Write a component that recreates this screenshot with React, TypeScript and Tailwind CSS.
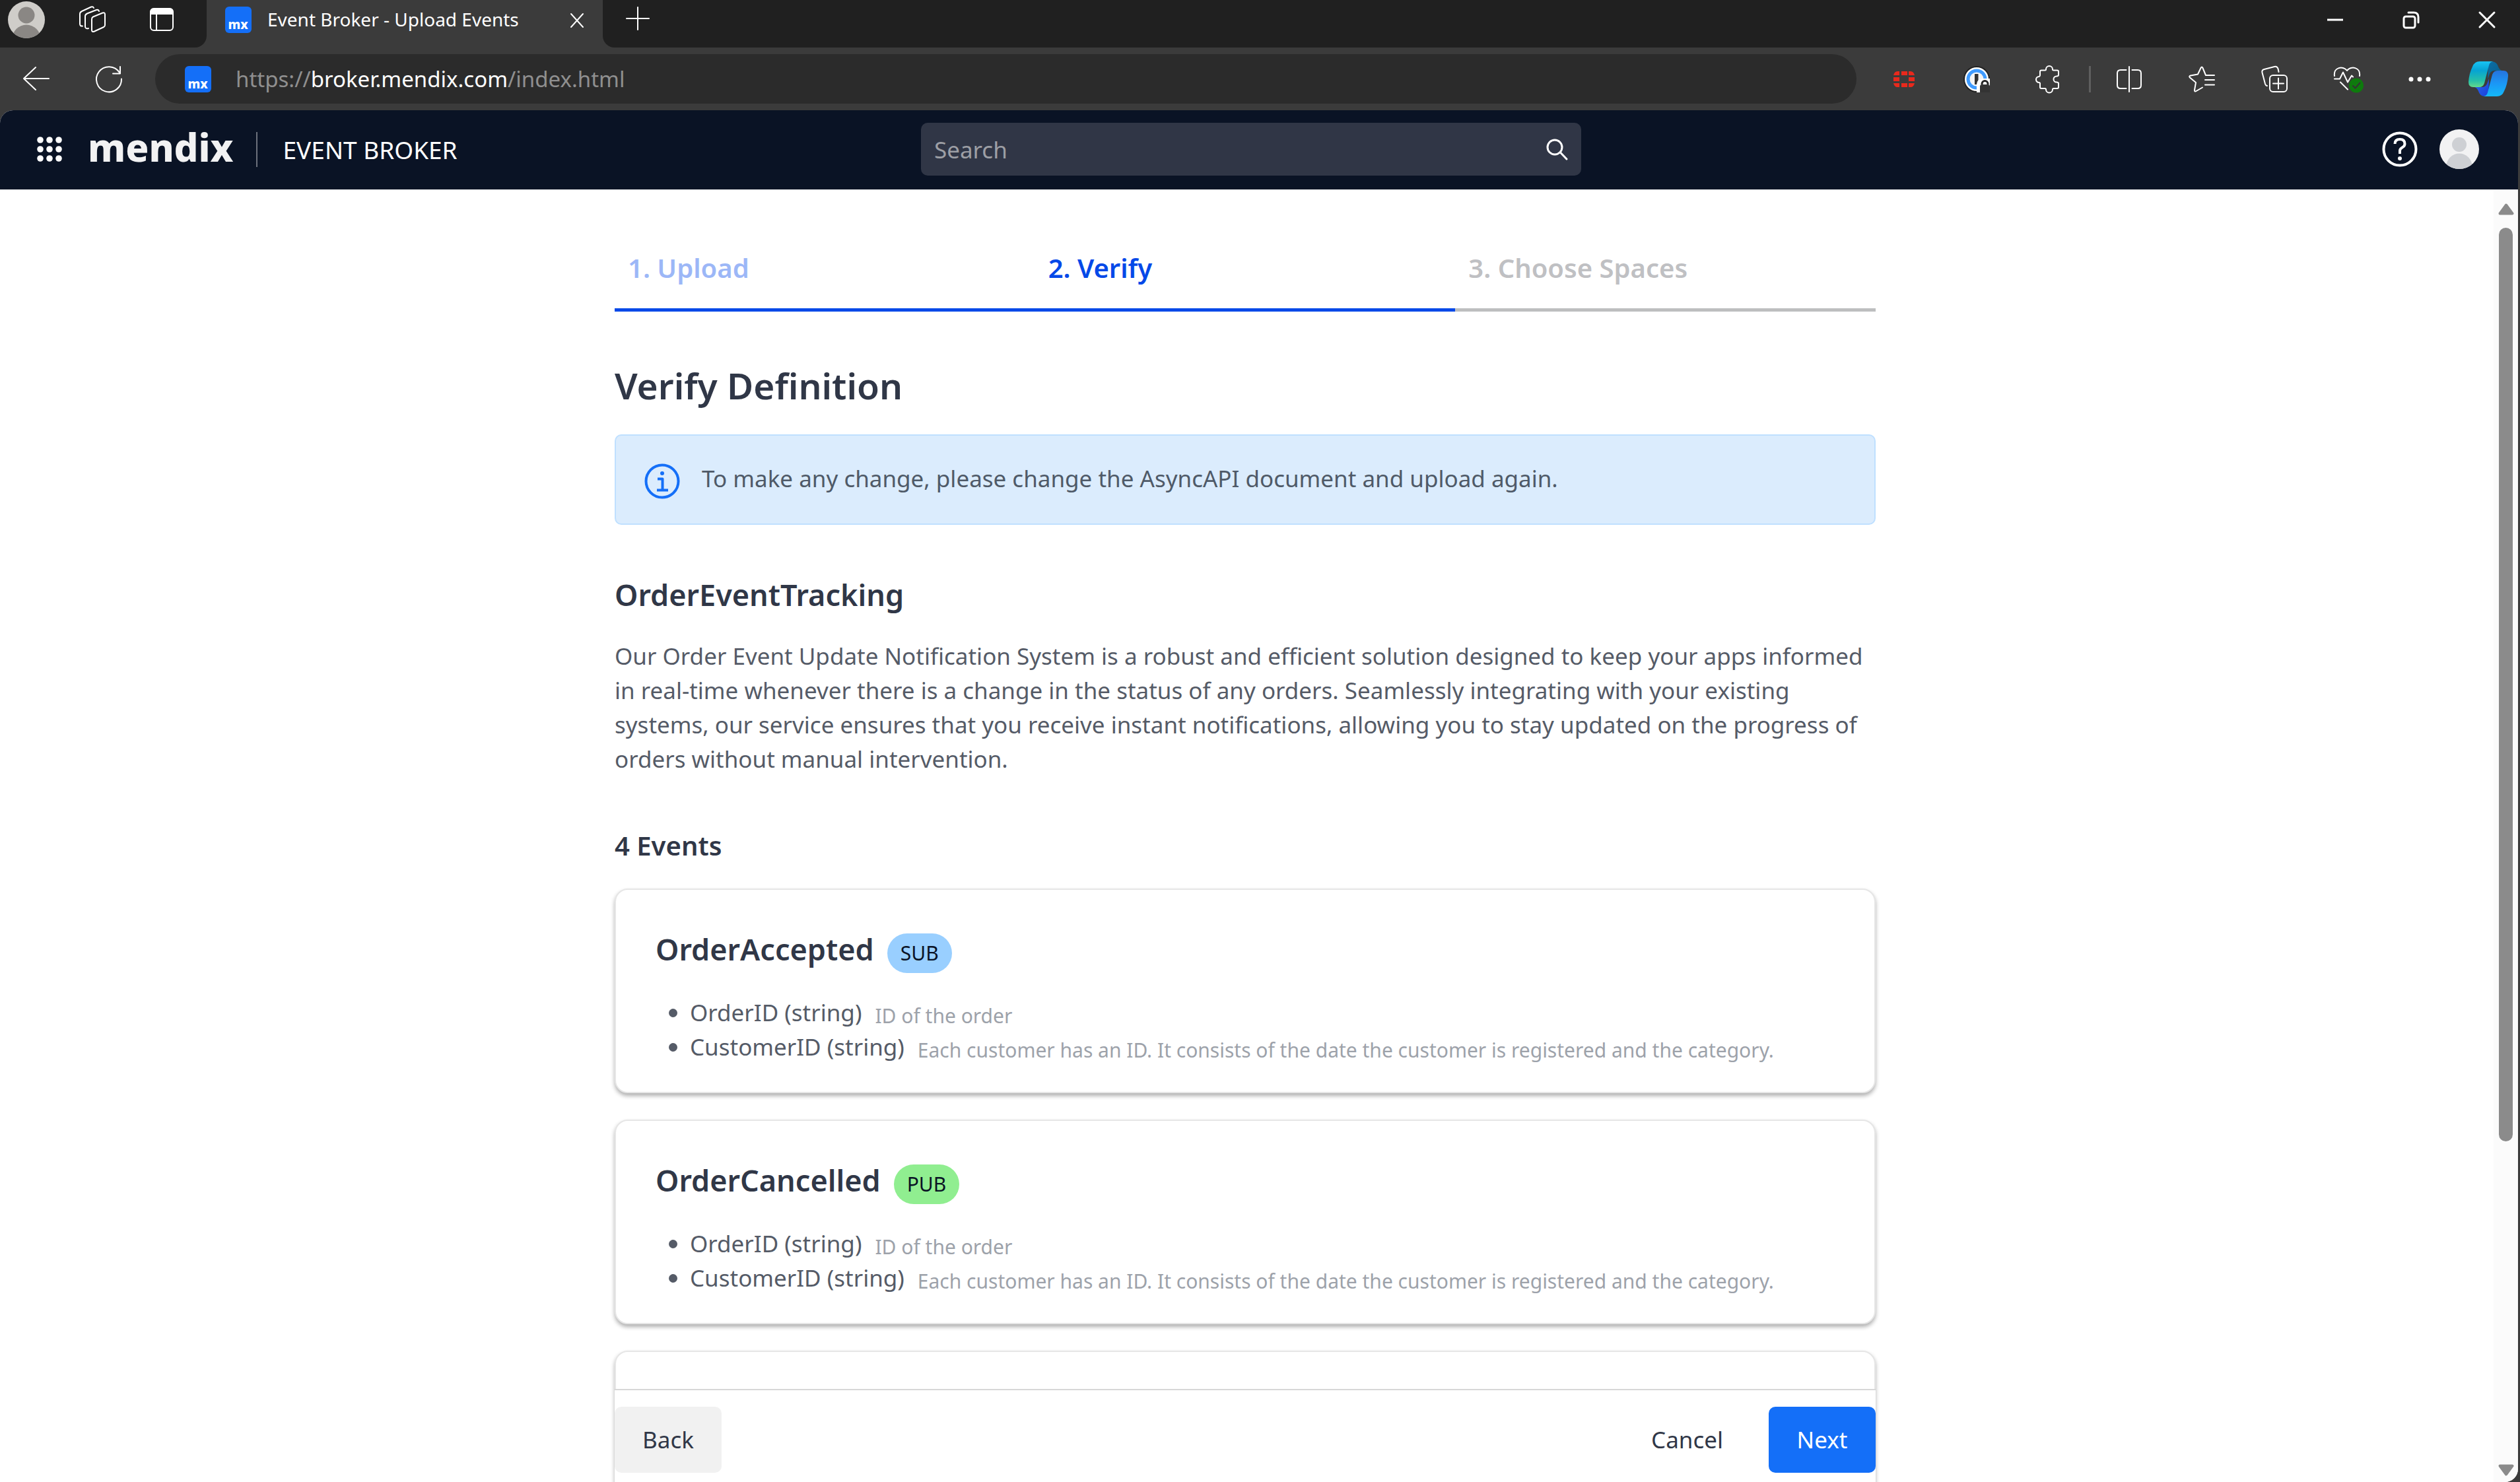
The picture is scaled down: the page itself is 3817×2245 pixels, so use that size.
import React from 'react';

type Field = { name: string; type: string; description: string };
type EventDef = { name: string; kind: 'SUB' | 'PUB'; fields: Field[] };

const FIELDS: Field[] = [
  { name: 'OrderID', type: 'string', description: 'ID of the order' },
  {
    name: 'CustomerID',
    type: 'string',
    description:
      'Each customer has an ID. It consists of the date the customer is registered and the category.',
  },
];

const EVENTS: EventDef[] = [
  { name: 'OrderAccepted', kind: 'SUB', fields: FIELDS },
  { name: 'OrderCancelled', kind: 'PUB', fields: FIELDS },
];

function Stroke({
  size = 40,
  width = 2,
  children,
}: {
  size?: number;
  width?: number;
  children: React.ReactNode;
}) {
  return (
    <svg
      width={size}
      height={size}
      viewBox={`0 0 ${size} ${size}`}
      fill="none"
      stroke="currentColor"
      strokeWidth={width}
      strokeLinecap="round"
      strokeLinejoin="round"
      className="shrink-0 overflow-visible"
      aria-hidden="true"
    >
      {children}
    </svg>
  );
}

function MxFavicon() {
  return (
    <svg width="40" height="40" viewBox="0 0 40 40" className="shrink-0" aria-hidden="true">
      <rect width="40" height="40" rx="6" fill="#146ff8" />
      <text x="19.5" y="34" textAnchor="middle" fontFamily="Noto Sans" fontWeight="800" fontSize="19" fill="#fff">
        mx
      </text>
    </svg>
  );
}

function ProfileAvatar() {
  return (
    <svg width="58" height="58" viewBox="0 0 58 58" aria-hidden="true">
      <defs>
        <clipPath id="profile-clip">
          <circle cx="29" cy="29" r="28" />
        </clipPath>
      </defs>
      <circle cx="29" cy="29" r="28" fill="#cfcdc9" />
      <g clipPath="url(#profile-clip)" fill="#8a8784">
        <circle cx="29" cy="22" r="12.5" />
        <circle cx="29" cy="58" r="21.5" />
      </g>
    </svg>
  );
}

function UserAvatar() {
  return (
    <svg width="60" height="60" viewBox="0 0 60 60" aria-hidden="true">
      <defs>
        <clipPath id="user-clip">
          <circle cx="30" cy="30" r="30" />
        </clipPath>
      </defs>
      <circle cx="30" cy="30" r="30" fill="#f2f2f3" />
      <g clipPath="url(#user-clip)" fill="#ced0d4">
        <circle cx="30" cy="23" r="11" />
        <circle cx="30" cy="56" r="19.5" />
      </g>
    </svg>
  );
}

function FortinetIcon() {
  return (
    <svg width="32" height="24" viewBox="0 0 32 24" fill="#e8291c" aria-hidden="true">
      <path d="M6 0h3v6H0C1 2 3 0 6 0ZM12 0h9v6h-9ZM23 0h3c3 0 5 2 6 6h-9ZM0 9h9v6H0ZM23 9h9v6h-9ZM0 18h9v6H6c-3 0-5-2-6-6ZM12 18h9v6h-9ZM23 18h9c-1 4-3 6-6 6h-3Z" />
    </svg>
  );
}

function PasswordIcon() {
  return (
    <svg width="40" height="40" viewBox="0 0 40 40" aria-hidden="true">
      <circle cx="20" cy="20" r="20" fill="#222" />
      <circle cx="20" cy="20" r="18" fill="#fff" />
      <circle cx="20" cy="20" r="13" fill="#f4f4f4" stroke="#3f9bff" strokeWidth="5" />
      <rect x="17" y="12" width="5.5" height="16" fill="#333" />
      <path d="M20 40V28q0-8 9-9h11v21Z" fill="#fff" />
      <path d="M25 40V31q0-3 3-3h9q3 0 3 3v9Z" fill="#333" />
      <path d="M28 28v-1a4.500 4.500 0 0 1 9 0v1" fill="none" stroke="#222" strokeWidth="3" />
    </svg>
  );
}

function CopilotIcon() {
  return (
    <svg width="60" height="54" viewBox="0 0 60 54" aria-hidden="true">
      <defs>
        <linearGradient id="cp-left" x1="0" y1="0" x2="0" y2="1">
          <stop offset="0" stopColor="#18c4f4" />
          <stop offset="0.35" stopColor="#06a3d4" />
          <stop offset="0.75" stopColor="#27c0a8" />
          <stop offset="1" stopColor="#63d98a" />
        </linearGradient>
        <linearGradient id="cp-top" x1="0" y1="0" x2="1" y2="1">
          <stop offset="0" stopColor="#0a6ea6" />
          <stop offset="1" stopColor="#0c5c86" />
        </linearGradient>
        <linearGradient id="cp-right" x1="0" y1="1" x2="0" y2="0">
          <stop offset="0" stopColor="#2673dd" />
          <stop offset="0.5" stopColor="#1b97f6" />
          <stop offset="1" stopColor="#14b9f8" />
        </linearGradient>
        <linearGradient id="cp-bottom" x1="0" y1="0" x2="1" y2="1">
          <stop offset="0" stopColor="#1b3fd8" />
          <stop offset="1" stopColor="#2a6af0" />
        </linearGradient>
      </defs>
      <path d="M30 0h6q7 1 9 8 2 5 6 6H40q-6 0-8 5l-3 8Z" fill="url(#cp-top)" />
      <path d="M30 0h6q7 1 9 8 2 5 6 6H40q-6 0-8 5l-3 8Z" fill="url(#cp-bottom)" transform="rotate(180 30 26.500)" />
      <path d="M17 0h20q-5 1-6 6l-7 27q-2 6-8 6H7q-7 0-7-8Q1 18 6 8 9 0 17 0Z" fill="url(#cp-left)" />
      <path
        d="M17 0h20q-5 1-6 6l-7 27q-2 6-8 6H7q-7 0-7-8Q1 18 6 8 9 0 17 0Z"
        fill="url(#cp-right)"
        transform="rotate(180 30 26.500)"
      />
    </svg>
  );
}

function ToolButton({ label, children }: { label: string; children: React.ReactNode }) {
  return (
    <button type="button" aria-label={label} className="flex h-full w-[110px] shrink-0 items-center justify-center">
      {children}
    </button>
  );
}

function TabStrip() {
  return (
    <div className="flex h-[72px] bg-[#3b3b3b] text-white">
      <div className="flex w-[313px] items-start rounded-br-[18px] bg-[#202020]">
        <button type="button" aria-label="Profile" className="ml-[11px] mt-px">
          <ProfileAvatar />
        </button>
        <button type="button" aria-label="Workspaces" className="ml-[51px] mt-[9px]">
          <Stroke>
            <path d="M19 20q0-2.500 2-3.500l14.500-6Q39 9.500 39 13v16q0 2-2 3l-14 6.500q-4 1.500-4-2Z" />
            <path d="M30 8q-1-3-4-2l-14 5.500q-3 1.500-3 4V31q0 4 5 3" />
            <path d="M22 3q-1-2.500-4-1.500L4 8Q1 9.500 1 12v15q0 4 4 3.500" />
          </Stroke>
        </button>
        <button type="button" aria-label="Tab actions" className="ml-[67px] mt-[12px]">
          <Stroke size={36}>
            <rect x="1" y="1" width="34" height="33" rx="5" />
            <path d="M1.500 9V6Q1.500 1.500 6 1.500h24Q34.500 1.500 34.500 6v3Z" fill="currentColor" />
            <path d="M10 10v24" />
          </Stroke>
        </button>
      </div>
      <div className="flex w-[600px] items-start pl-[28px] pt-[10px]">
        <MxFavicon />
        <span className="ml-[24px] flex-1 whitespace-nowrap text-[28px] leading-[38px]">
          Event Broker - Upload Events
        </span>
        <button type="button" aria-label="Close tab" className="mr-[28px] mt-[10px]">
          <Stroke size={22}>
            <path d="M2 1l18 20M20 1L2 21" />
          </Stroke>
        </button>
      </div>
      <div className="flex flex-1 items-start rounded-bl-[18px] bg-[#202020]">
        <button type="button" aria-label="New tab" className="ml-[36px] mt-[11px]">
          <Stroke size={34}>
            <path d="M17 0v34M0 17h34" />
          </Stroke>
        </button>
        <div className="ml-auto flex h-[59px] gap-[15px]">
          <button type="button" aria-label="Minimize" className="flex w-[100px] items-center justify-center">
            <Stroke size={26} width={3}>
              <path d="M1 13h24" strokeLinecap="butt" />
            </Stroke>
          </button>
          <button type="button" aria-label="Restore" className="flex w-[100px] items-center justify-center">
            <Stroke size={26} width={3}>
              <rect x="2" y="8" width="17" height="17" rx="3" />
              <path d="M9 2h8q7 0 7 7v8" />
            </Stroke>
          </button>
          <button type="button" aria-label="Close window" className="flex w-[100px] items-center justify-center">
            <Stroke size={26} width={3}>
              <path d="M2 2l22 22M24 2L2 24" />
            </Stroke>
          </button>
        </div>
      </div>
    </div>
  );
}

function Toolbar() {
  return (
    <div className="flex h-[95px] items-center bg-[#3b3b3b] text-white">
      <ToolButton label="Back">
        <Stroke>
          <path d="M39 19H2M19 2L1 19l18 17" />
        </Stroke>
      </ToolButton>
      <ToolButton label="Reload">
        <Stroke>
          <path d="M39 19.500A19 19 0 1 1 36 10" />
          <path d="M37 1v10.500H26" />
        </Stroke>
      </ToolButton>
      <div className="ml-[15px] mr-[17px] flex h-[75px] flex-1 items-center rounded-full bg-[#2b2b2b] pl-[45px]">
        <MxFavicon />
        <span className="ml-[37px] whitespace-nowrap text-[33px] leading-[48px] text-[#8f8f8f]">
          https://<span className="text-white">broker.mendix.com</span>/index.html
        </span>
      </div>
      <ToolButton label="Fortinet">
        <FortinetIcon />
      </ToolButton>
      <ToolButton label="Password manager">
        <PasswordIcon />
      </ToolButton>
      <ToolButton label="Extensions">
        <Stroke>
          <path d="M8 6.500h5.500q1.500 0 1.500-1.500a5 5 0 0 1 10 0q0 1.500 1.500 1.500H32q2 0 2 2v5q0 2-3 2a4.500 4.500 0 0 0 0 9q3 0 3 2V32q0 2-2 2h-5.500q-1.500 0-1.500 1.500a5 5 0 0 1-10 0q0-1.500-1.500-1.500H8q-2 0-2-2v-5.500q0-1.500-1.500-1.500a4.500 4.500 0 0 1 0-9Q6 15.500 6 14V8.500q0-2 2-2Z" />
        </Stroke>
      </ToolButton>
      <div className="ml-[5px] mr-[3px] h-[40px] w-[3px] bg-[#5f5f5f]" />
      <ToolButton label="Split screen">
        <Stroke>
          <path d="M20 1v38M15.500 6H7q-5 0-5 5v18q0 5 5 5h8.500M24.500 6H33q5 0 5 5v18q0 5-5 5h-8.500" />
        </Stroke>
      </ToolButton>
      <ToolButton label="Favorites">
        <Stroke>
          <path d="M39 14H26L21.500 3Q20 0 18.500 3L14 12.500 3 14.500q-3 1-1 3l9 7.500-2 11.500q0 3 2.500 1.500l9.500-5.500M25 21h14M25 28.500h14" />
        </Stroke>
      </ToolButton>
      <ToolButton label="Collections">
        <Stroke>
          <path d="M9 30q-2 0-3-3L1.500 10q-1-4 3-5L20 1q4-1 5.500 3l1 5" />
          <rect x="13" y="14" width="26" height="25" rx="5" />
          <path d="M26 18.500v16M18 26.500h16" />
        </Stroke>
      </ToolButton>
      <ToolButton label="Browser essentials">
        <Stroke>
          <path d="M1 15C-1 2 14-1 20 7c6-8 21-5 19 8" />
          <path d="M1 19.500h8l5-10 7 15 6-10 2 2M10 24.500l11 11" />
          <circle cx="34" cy="29.500" r="11" fill="#0e7a0d" stroke="none" />
          <path d="M29 30l3.500 3.500 7-8" stroke="#333" />
        </Stroke>
      </ToolButton>
      <ToolButton label="Settings and more">
        <svg width="34" height="8" viewBox="0 0 34 8" fill="currentColor" aria-hidden="true">
          <circle cx="4" cy="4" r="3.500" />
          <circle cx="17" cy="4" r="3.500" />
          <circle cx="30" cy="4" r="3.500" />
        </svg>
      </ToolButton>
      <button type="button" aria-label="Copilot" className="flex w-[97px] shrink-0 items-center justify-center">
        <CopilotIcon />
      </button>
    </div>
  );
}

function AppHeader() {
  return (
    <header className="flex h-[120px] shrink-0 items-center bg-[#0a1325] pb-[2px] pl-[35px] pr-[59px] text-white">
      <div className="flex flex-1 items-center">
        <button type="button" aria-label="App switcher" className="px-[21px]">
          <svg width="38" height="38" viewBox="0 0 38 38" fill="currentColor" aria-hidden="true">
            {[5, 19, 33].map((y) =>
              [5, 19, 33].map((x) => <circle key={`${x}-${y}`} cx={x} cy={y} r="4.800" />),
            )}
          </svg>
        </button>
        <a href="#home" className="mb-[6px] ml-[18px] text-[58px] font-extrabold leading-[72px] text-[#f2f2f3]">
          mendix
        </a>
        <div className="ml-[34px] h-[53px] w-[2px] bg-[#6c717c]" />
        <span className="ml-[39px] mt-[2px] whitespace-nowrap text-[37px] leading-[52px]">EVENT BROKER</span>
      </div>
      <form role="search" className="flex h-[80px] w-[1000px] items-center rounded-[10px] bg-[#303646] px-[20px]">
        <input
          type="search"
          aria-label="Search"
          placeholder="Search"
          className="h-full min-w-0 flex-1 bg-transparent text-[35px] leading-[52px] text-white outline-none placeholder:text-[#9d9fa5]"
        />
        <button type="submit" aria-label="Submit search">
          <Stroke size={32} width={3}>
            <circle cx="12" cy="13" r="11" />
            <path d="M20.500 21L30 31" />
          </Stroke>
        </button>
      </form>
      <div className="flex flex-1 items-center justify-end gap-[34px]">
        <button type="button" aria-label="Help">
          <Stroke size={52} width={4}>
            <circle cx="26" cy="26" r="24.500" />
            <path d="M18.500 18q0-7 7.500-7t7.500 7q0 3.500-4 5.500-3.500 2-3.500 5v4.500" strokeLinecap="butt" />
            <circle cx="26" cy="40" r="3" fill="currentColor" stroke="none" />
          </Stroke>
        </button>
        <button type="button" aria-label="Account">
          <UserAvatar />
        </button>
      </div>
    </header>
  );
}

function Steps() {
  return (
    <ol className="grid grid-cols-3 text-[40px] font-semibold leading-[60px]">
      <li className="border-b-[5px] border-[#0549e8] pb-[31px] pl-[20px] text-[#9cb7f7]">1. Upload</li>
      <li aria-current="step" className="border-b-[5px] border-[#0549e8] pb-[31px] pl-[20px] text-[#0549e8]">
        2. Verify
      </li>
      <li className="border-b-[5px] border-[#bdbebf] pb-[31px] pl-[20px] text-[#bfc0c3]">3. Choose Spaces</li>
    </ol>
  );
}

function EventCard({ event }: { event?: EventDef }) {
  return (
    <article className="min-h-[310px] rounded-[20px] border-2 border-[#e6e6e6] bg-white px-[60px] pb-[39px] pt-[60px] shadow-[0_4px_6px_rgba(0,0,0,0.32)]">
      {event && (
        <>
          <div className="flex items-baseline gap-[20px]">
            <h4 className="text-[45px] font-semibold leading-[60px] text-[#303747]">{event.name}</h4>
            <span
              className={
                event.kind === 'SUB'
                  ? 'rounded-full bg-[#99cfff] px-[20px] text-[30px] leading-[60px] text-[#0a1325]'
                  : 'rounded-full bg-[#90ee90] px-[20px] text-[30px] leading-[60px] text-[#0a1325]'
              }
            >
              {event.kind}
            </span>
          </div>
          <ul className="mt-[34px] pl-[20px]">
            {event.fields.map((f) => (
              <li key={f.name} className="flex items-end">
                <span className="mr-[19px] size-[13px] self-center rounded-full bg-[#555b67]" />
                <span className="text-[35px] leading-[52px] text-[#555b67]">
                  {f.name} ({f.type})
                </span>
                <span className="ml-[20px] text-[30px] leading-[42px] text-[#9da2aa]">{f.description}</span>
              </li>
            ))}
          </ul>
        </>
      )}
    </article>
  );
}

function Scrollbar() {
  return (
    <div className="flex w-[37px] shrink-0 flex-col items-center bg-[#fbfbfb] pb-[9px] pt-[21px]" aria-hidden="true">
      <svg width="24" height="18" viewBox="0 0 24 18" fill="#8b8b8b" stroke="#8b8b8b" strokeWidth="4" strokeLinejoin="round">
        <path d="M12 2.500L21.500 15.500h-19Z" />
      </svg>
      <div className="mb-[28px] mt-[19px] min-h-0 w-[21px] flex-1">
        <div className="h-3/4 rounded-full bg-[#8b8b8b]" />
      </div>
      <svg width="24" height="18" viewBox="0 0 24 18" fill="#8b8b8b" stroke="#8b8b8b" strokeWidth="4" strokeLinejoin="round">
        <path d="M12 15.500L21.500 2.500h-19Z" />
      </svg>
    </div>
  );
}

export default function App() {
  return (
    <div className="flex h-screen flex-col overflow-hidden bg-[#3b3b3b] font-['Noto_Sans',sans-serif]">
      <TabStrip />
      <Toolbar />
      <div className="mr-[3px] flex min-h-0 flex-1 flex-col overflow-hidden rounded-t-[20px] rounded-br-[20px] bg-white">
        <AppHeader />
        <div className="flex min-h-0 flex-1">
          <main className="flex min-w-0 flex-1 justify-center overflow-hidden pr-[5px]">
            <div className="relative w-full max-w-[1910px] pt-[89px]">
              <Steps />
              <h1 className="mt-[76px] text-[55px] font-semibold leading-[72px] text-[#303747]">Verify Definition</h1>
              <div
                role="note"
                className="mt-[38px] flex items-start gap-[34px] rounded-[10px] border-2 border-[#bfe0ff] bg-[#dbecfd] pb-[38px] pl-[44px] pr-[44px] pt-[39px]"
              >
                <span className="mt-1 text-[#146ff8]">
                  <Stroke size={52} width={4}>
                    <circle cx="26" cy="26" r="24.500" />
                    <circle cx="26" cy="14" r="3" fill="currentColor" stroke="none" />
                    <path d="M19 22.500h7.500V39.500M18 39.500h17" strokeLinecap="butt" />
                  </Stroke>
                </span>
                <p className="text-[35px] leading-[52px] text-[#4f5a68]">
                  To make any change, please change the AsyncAPI document and upload again.
                </p>
              </div>
              <h2 className="mt-[76px] text-[45px] font-semibold leading-[60px] text-[#303747]">OrderEventTracking</h2>
              <p className="mt-[37px] text-[35px] leading-[52px] text-[#555b67]">
                Our Order Event Update Notification System is a robust and efficient solution designed to keep your apps
                informed in real-time whenever there is a change in the status of any orders. Seamlessly integrating with
                your existing systems, our service ensures that you receive instant notifications, allowing you to stay
                updated on the progress of orders without manual intervention.
              </p>
              <h3 className="mt-[75px] text-[40px] font-semibold leading-[60px] text-[#303747]">4 Events</h3>
              <div className="mt-[35px] flex flex-col gap-[40px]">
                {EVENTS.map((e) => (
                  <EventCard key={e.name} event={e} />
                ))}
                <EventCard />
              </div>
              <footer className="absolute inset-x-0 bottom-0 flex items-center border-t-2 border-[#d7d7d7] bg-white pb-[14px] pt-[25px] text-[35px] leading-[52px]">
                <button type="button" className="h-[100px] min-w-[162px] rounded-[10px] bg-[#f1f1f1] text-[#303747]">
                  Back
                </button>
                <button type="button" className="ml-auto mr-[26px] h-[100px] px-[43px] text-[#303747]">
                  Cancel
                </button>
                <button type="button" className="h-[100px] min-w-[162px] rounded-[10px] bg-[#146ff8] text-white">
                  Next
                </button>
              </footer>
            </div>
          </main>
          <Scrollbar />
        </div>
      </div>
    </div>
  );
}
